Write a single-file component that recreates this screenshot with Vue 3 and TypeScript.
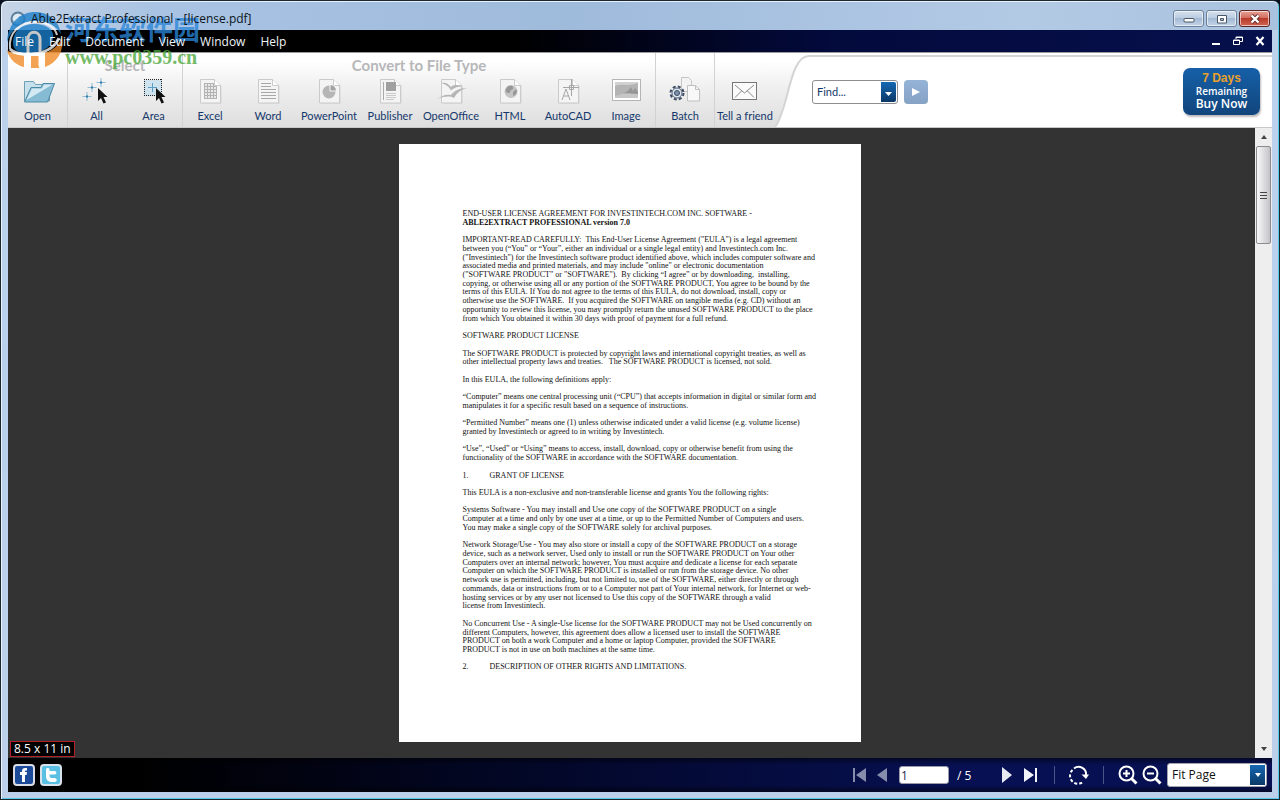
<script setup lang="ts">
import { ref } from 'vue'

interface Tool {
  id: string
  label: string
}

const menus: string[] = ['File', 'Edit', 'Document', 'View', 'Window', 'Help']

const convertTools: Tool[] = [
  { id: 'excel', label: 'Excel' },
  { id: 'word', label: 'Word' },
  { id: 'powerpoint', label: 'PowerPoint' },
  { id: 'publisher', label: 'Publisher' },
  { id: 'openoffice', label: 'OpenOffice' },
  { id: 'html', label: 'HTML' },
  { id: 'autocad', label: 'AutoCAD' },
  { id: 'image', label: 'Image' },
]

const find = ref('Find...')
const page = ref('1')
const zoomLevel = ref('Fit Page')

interface Line {
  text: string
  bold?: boolean
  num?: string
}

const raw: string[] = [
  'END-USER LICENSE AGREEMENT FOR INVESTINTECH.COM INC. SOFTWARE -',
  '*ABLE2EXTRACT PROFESSIONAL version 7.0',
  '',
  'IMPORTANT-READ CAREFULLY:  This End-User License Agreement ("EULA") is a legal agreement',
  'between you (“You” or “Your”, either an individual or a single legal entity) and Investintech.com Inc.',
  '("Investintech") for the Investintech software product identified above, which includes computer software and',
  'associated media and printed materials, and may include "online" or electronic documentation',
  '("SOFTWARE PRODUCT" or "SOFTWARE").  By clicking “I agree” or by downloading,  installing,',
  'copying, or otherwise using all or any portion of the SOFTWARE PRODUCT, You agree to be bound by the',
  'terms of this EULA. If You do not agree to the terms of this EULA, do not download, install, copy or',
  'otherwise use the SOFTWARE.  If you acquired the SOFTWARE on tangible media (e.g. CD) without an',
  'opportunity to review this license, you may promptly return the unused SOFTWARE PRODUCT to the place',
  'from which You obtained it within 30 days with proof of payment for a full refund.',
  '',
  'SOFTWARE PRODUCT LICENSE',
  '',
  'The SOFTWARE PRODUCT is protected by copyright laws and international copyright treaties, as well as',
  'other intellectual property laws and treaties.   The SOFTWARE PRODUCT is licensed, not sold.',
  '',
  'In this EULA, the following definitions apply:',
  '',
  '“Computer” means one central processing unit (“CPU”) that accepts information in digital or similar form and',
  'manipulates it for a specific result based on a sequence of instructions.',
  '',
  '“Permitted Number” means one (1) unless otherwise indicated under a valid license (e.g. volume license)',
  'granted by Investintech or agreed to in writing by Investintech.',
  '',
  '“Use”, “Used” or “Using” means to access, install, download, copy or otherwise benefit from using the',
  'functionality of the SOFTWARE in accordance with the SOFTWARE documentation.',
  '',
  '1.|GRANT OF LICENSE',
  '',
  'This EULA is a non-exclusive and non-transferable license and grants You the following rights:',
  '',
  'Systems Software - You may install and Use one copy of the SOFTWARE PRODUCT on a single',
  'Computer at a time and only by one user at a time, or up to the Permitted Number of Computers and users.',
  'You may make a single copy of the SOFTWARE solely for archival purposes.',
  '',
  'Network Storage/Use - You may also store or install a copy of the SOFTWARE PRODUCT on a storage',
  'device, such as a network server, Used only to install or run the SOFTWARE PRODUCT on Your other',
  'Computers over an internal network; however, You must acquire and dedicate a license for each separate',
  'Computer on which the SOFTWARE PRODUCT is installed or run from the storage device. No other',
  'network use is permitted, including, but not limited to, use of the SOFTWARE, either directly or through',
  'commands, data or instructions from or to a Computer not part of Your internal network, for Internet or web-',
  'hosting services or by any user not licensed to Use this copy of the SOFTWARE through a valid',
  'license from Investintech.',
  '',
  'No Concurrent Use - A single-Use license for the SOFTWARE PRODUCT may not be Used concurrently on',
  'different Computers, however, this agreement does allow a licensed user to install the SOFTWARE',
  'PRODUCT on both a work Computer and a home or laptop Computer, provided the SOFTWARE',
  'PRODUCT is not in use on both machines at the same time.',
  '',
  '2.|DESCRIPTION OF OTHER RIGHTS AND LIMITATIONS.',
]

const lines: Line[] = raw.map((text) => {
  if (text.startsWith('*')) return { text: text.slice(1), bold: true }
  const [num, rest] = text.split('|')
  return rest ? { text: rest, num } : { text }
})
</script>

<template>
  <div class="window">
    <header class="titlebar">
      <svg class="app-icon" viewBox="0 0 16 16" aria-hidden="true">
        <circle cx="8" cy="8" r="7.5" fill="#5d7f9c" />
        <circle cx="8" cy="8" r="5.5" fill="#9fbdd3" />
        <path d="M3 6c2-4 7-4 9-1-3-1-4 1-3 3s-1 4-3 3-4-2-3-5z" fill="#dfeaf2" />
      </svg>
      <h1 class="title">Able2Extract Professional - [license.pdf]</h1>
      <div class="win-buttons">
        <button type="button" class="win-btn" aria-label="Minimize">
          <svg width="12" height="10" viewBox="0 0 12 10"><rect x="1" y="4.5" width="10" height="3.5" rx="1" fill="#fff" stroke="#4a5766" /></svg>
        </button>
        <button type="button" class="win-btn" aria-label="Maximize">
          <svg width="12" height="10" viewBox="0 0 12 10"><path d="M1.500 1.500h9v7.500h-9zM4.500 4.500v2h3v-2z" fill="#fff" fill-rule="evenodd" stroke="#4a5766" /></svg>
        </button>
        <button type="button" class="win-btn close" aria-label="Close">
          <svg width="12" height="10" viewBox="0 0 12 10"><path d="M2.500 1.500L9.500 8.500M9.500 1.500L2.500 8.500" stroke="#5a2a2a" stroke-width="4" /><path d="M2.500 1.500L9.500 8.500M9.500 1.500L2.500 8.500" stroke="#fff" stroke-width="2.400" /></svg>
        </button>
      </div>
    </header>

    <nav class="menubar">
      <button v-for="m in menus" :key="m" type="button" class="menu">{{ m }}</button>
      <div class="mdi">
        <button type="button" aria-label="Minimize document">
          <svg width="10" height="10" viewBox="0 0 10 10"><path d="M1 8h8" stroke="#fff" stroke-width="2" /></svg>
        </button>
        <button type="button" aria-label="Restore document">
          <svg width="10" height="10" viewBox="0 0 10 10" fill="none" stroke="#fff"><path d="M3 3V1h6.500v4.500H7M3 1.500h6.500M.5 4h6v4.500h-6zM.5 4.500h6" /></svg>
        </button>
        <button type="button" aria-label="Close document">
          <svg width="10" height="10" viewBox="0 0 10 10"><path d="M1.500 1l7 8M8.500 1l-7 8" stroke="#fff" stroke-width="2.200" /></svg>
        </button>
      </div>
    </nav>

    <section class="toolbar">
      <div class="group open">
        <span class="group-title"></span>
        <button type="button" class="tool">
          <svg class="ico" viewBox="0 0 34 30" aria-hidden="true">
            <path d="M3.500 25V5.500h9l2 3h14v16.500z" fill="#c6e0ec" stroke="#6f9fb5" />
            <path d="M3.500 26L10 11.500h10l2-4h11.500L26.500 26z" fill="#86bbd4" stroke="#4f8aa5" />
            <path d="M5.500 24L11 12.500h10l2-4h8.500z" fill="#d3eaf3" />
          </svg>
          <span>Open</span>
        </button>
      </div>

      <div class="group select">
        <span class="group-title">Select</span>
        <button type="button" class="tool">
          <svg class="ico" viewBox="0 0 34 30" aria-hidden="true">
            <path d="M7 16v9M2.500 20.500h9M12 7v9M7.500 11.500h9M21 2v9M16.500 6.500h9" stroke="#8fbcd4" />
            <path d="M6 20.500h2M11 11.500h2M20 6.500h2" stroke="#2e7ba8" stroke-width="2" />
            <path d="M18 12v13l3-3 2.500 5.500 2.500-1-2.500-5.500h4z" fill="#111" />
          </svg>
          <span>All</span>
        </button>
        <button type="button" class="tool">
          <svg class="ico" viewBox="0 0 34 30" aria-hidden="true">
            <rect x="7" y="4" width="18" height="16" fill="#cfe3ef" />
            <path d="M7 3.500h18M7 19.500h18M7.500 3v17M24.500 3v17" stroke="#222" stroke-dasharray="1 1" />
            <path d="M15.500 7v9M11 11.500h9" stroke="#5a9ec4" />
            <path d="M19 12v13l3-3 2.500 5.500 2.500-1-2.500-5.500h4z" fill="#111" />
          </svg>
          <span>Area</span>
        </button>
      </div>

      <div class="group convert">
        <span class="group-title">Convert to File Type</span>
        <button v-for="t in convertTools" :key="t.id" type="button" class="tool">
          <svg class="ico" viewBox="0 0 34 30" aria-hidden="true">
            <template v-if="t.id !== 'image'">
              <path d="M8.500 4.500h14l6 5v18h-20z" fill="#c9c9c9" opacity=".6" />
              <path d="M7.500 3.500h14l6 6v17.500h-20z" fill="#f4f4f4" stroke="#cbcbcb" />
              <path d="M21.500 3.500v6h6" fill="#fff" stroke="#cbcbcb" />
            </template>
            <g v-if="t.id === 'excel'">
              <path d="M11.500 7.500h9v3h3v12h-12z" fill="#e8e8e8" />
              <path d="M11.500 7v16M14.500 7v16M17.500 7v16M20.500 7v16M23.500 10v13M11 7.500h10M11 10.500h13M11 13.500h13M11 16.500h13M11 19.500h13M11 22.500h13" stroke="#b3b3b3" />
            </g>
            <path v-else-if="t.id === 'word'" d="M10 7.500h10M10 10.500h10M10 13.500h15M10 16.500h15M10 19.500h15M10 22.500h15" stroke="#a8a8a8" />
            <g v-else-if="t.id === 'powerpoint'">
              <circle cx="17" cy="16" r="6.500" fill="#b6b6b6" />
              <path d="M18 15V8.500a6.500 6.500 0 0 1 6.500 6.500z" fill="#a2a2a2" stroke="#f6f6f6" />
            </g>
            <g v-else-if="t.id === 'publisher'">
              <path d="M10.500 6v18" stroke="#aaa" />
              <rect x="13" y="6" width="10" height="9" fill="#a0a0a0" />
              <path d="M13 17.500h10M13 19.500h10M13 21.500h10M13 23.500h8" stroke="#c9c9c9" />
            </g>
            <g v-else-if="t.id === 'openoffice'" fill="#b6b6b6">
              <path d="M7 7c4-1 7 0 10 4 3-3 7-2 12-.5-5 0-8 .5-12 4-2-4-5-6-10-7.500z" />
              <path d="M3 23c6-4 9-5 14-4 3-4 8-7 16-7-7 2-10 5-13 10-4-2-9-2-17 1z" />
            </g>
            <g v-else-if="t.id === 'html'">
              <circle cx="18" cy="15.500" r="6.500" fill="#c4c4c4" />
              <path d="M13 13c2-4 6-4 7-2s-1 3-2 3 0 3-2 3-4-1-3-4zM20 16l3-3c2 3 0 6-3 7z" fill="#979797" />
            </g>
            <g v-else-if="t.id === 'autocad'" fill="none" stroke="#a6a6a6">
              <path d="M11 24l4-11 4 11M12.500 20h5" />
              <path d="M20.500 3v17M12 11.500h16M18.500 9.500h4v4h-4z" />
            </g>
            <g v-else-if="t.id === 'image'">
              <rect x="3.500" y="3.500" width="28" height="21" fill="#fff" stroke="#b5b5b5" />
              <rect x="6" y="6" width="23" height="16" fill="#b4b4b4" />
              <path d="M6 10c8-3 12 1 23-3V6H6z" fill="#d2d2d2" />
              <path d="M15 17c3-1 5-3 7-6l2 4 2-3 3 4v3z" fill="#969696" />
              <path d="M6 20c8-3 14-3 23-2v4H6z" fill="#c6c6c6" />
            </g>
          </svg>
          <span>{{ t.label }}</span>
        </button>
      </div>

      <div class="group batch">
        <span class="group-title"></span>
        <button type="button" class="tool">
          <svg class="ico" viewBox="0 0 34 30" aria-hidden="true">
            <path d="M13.500 1.500h7l3 3v11h-10z" fill="#f3f3f3" stroke="#c6c6c6" />
            <path d="M19.500 9.500h8l4 4v11.500h-12z" fill="#f8f8f8" stroke="#c0c0c0" />
            <path d="M27.500 9.500v4h4" fill="none" stroke="#c0c0c0" />
            <circle cx="9" cy="17" r="6.500" fill="none" stroke="#3b4a60" stroke-width="2" stroke-dasharray="3 2.100" />
            <circle cx="9" cy="17" r="5" fill="#dfe6ee" stroke="#54657e" />
            <circle cx="9" cy="17" r="2.500" fill="#7d93ae" stroke="#3b4a60" />
          </svg>
          <span>Batch</span>
        </button>
      </div>

      <div class="group tell">
        <span class="group-title"></span>
        <button type="button" class="tool">
          <svg class="ico" viewBox="0 0 34 30" aria-hidden="true">
            <rect x="4.500" y="6.500" width="24" height="17" fill="#fbfbfb" stroke="#777" />
            <path d="M7 9l9.500 8L26 9M7 21.500l6.500-6.500M26 21.500L19.500 15" fill="none" stroke="#8a8a8a" />
          </svg>
          <span>Tell a friend</span>
        </button>
      </div>

      <svg class="curve" viewBox="0 0 37 74" aria-hidden="true">
        <path d="M0 74C14 56 14 3 34 3H37V74z" fill="#fff" />
        <path d="M0 74C14 56 14 3 34 3H37" fill="none" stroke="#d4d4d6" stroke-width="2" />
      </svg>
      <div class="side">
        <form class="find" @submit.prevent>
          <div class="combo">
            <input v-model="find" aria-label="Find" type="text" />
            <button type="button" aria-label="Find history">
              <svg width="7" height="4" viewBox="0 0 7 4"><path d="M0 0h7L3.500 4z" fill="#fff" /></svg>
            </button>
          </div>
          <button type="submit" class="go" aria-label="Find next">
            <svg width="10" height="10" viewBox="0 0 10 10"><path d="M1 1l8 4-8 4z" fill="#fff" /></svg>
          </button>
        </form>
        <button type="button" class="buy">
          <span class="days">7 Days</span>
          <span class="remaining">Remaining</span>
          <span class="now">Buy Now</span>
        </button>
      </div>
    </section>

    <main class="workspace">
      <div class="canvas">
        <article class="sheet">
          <p v-for="(l, i) in lines" :key="i" :class="{ bold: l.bold }">
            <span v-if="l.num" class="num">{{ l.num }}</span>{{ l.text }}
          </p>
        </article>
        <div class="size">8.5 x 11 in</div>
      </div>
      <div class="scrollbar">
        <button type="button" aria-label="Scroll up">
          <svg width="6" height="4" viewBox="0 0 6 4"><path d="M0 4h6L3 0z" fill="#444" /></svg>
        </button>
        <div class="thumb"><i></i><i></i><i></i></div>
        <button type="button" class="down" aria-label="Scroll down">
          <svg width="6" height="4" viewBox="0 0 6 4"><path d="M0 0h6L3 4z" fill="#444" /></svg>
        </button>
      </div>
    </main>

    <footer class="status">
      <a href="#" class="social" aria-label="Facebook">
        <svg viewBox="0 0 22 22"><rect x="1" y="1" width="20" height="20" rx="3" fill="#1b4a98" stroke="#d8dde6" stroke-width="2" /><path d="M9 18v-7H7V8h2V7c0-2.500 1.500-3.500 5-3v2.500c-1.500-.2-2 0-2 1.500h2l-.4 3H12v7z" fill="#fff" /></svg>
      </a>
      <a href="#" class="social" aria-label="Twitter">
        <svg viewBox="0 0 22 22"><rect x="1" y="1" width="20" height="20" rx="3" fill="#59bfe3" stroke="#d8e2ea" stroke-width="2" /><path d="M6 5.500c0-2 3.500-2 3.500 0V7h5c2.500 0 2.500 3.500 0 3.500h-5c-.3 3 1 4 5 3.500 3 0 3 4 0 4-5.500.5-8.500-1-8.500-6z" fill="#fff" /></svg>
      </a>
      <div class="pager">
        <button type="button" class="nav" aria-label="First page">
          <svg width="14" height="16" viewBox="0 0 14 16"><path d="M0 1h2v14H0zM13 1v14L3 8z" fill="#868cab" /></svg>
        </button>
        <button type="button" class="nav prev" aria-label="Previous page">
          <svg width="10" height="16" viewBox="0 0 10 16"><path d="M10 1v14L0 8z" fill="#868cab" /></svg>
        </button>
        <input v-model="page" class="page-input" type="text" aria-label="Page" />
        <span class="of">/ 5</span>
        <button type="button" class="nav" aria-label="Next page">
          <svg width="10" height="16" viewBox="0 0 10 16"><path d="M0 0v16l10-8z" fill="#e8eaf2" /></svg>
        </button>
        <button type="button" class="nav last" aria-label="Last page">
          <svg width="14" height="16" viewBox="0 0 14 16"><path d="M0 1v14l10-7zM11 1h2v14h-2z" fill="#f4f5f9" /></svg>
        </button>
        <span class="sep"></span>
        <button type="button" class="nav rotate" aria-label="Rotate">
          <svg width="20" height="20" viewBox="0 0 20 20"><path d="M5 3.500a7.500 7.500 0 0 1 12 7" fill="none" stroke="#fff" stroke-width="2" /><path d="M12.500 9.500H20L17 14z" fill="#fff" /><path d="M3.500 5a7.500 7.500 0 0 0 11 11.500" fill="none" stroke="#fff" stroke-width="2" stroke-dasharray="3 2" /></svg>
        </button>
        <span class="sep"></span>
        <button type="button" class="nav" aria-label="Zoom in">
          <svg width="20" height="20" viewBox="0 0 20 20" fill="none" stroke="#fff"><circle cx="8.500" cy="8.500" r="7" stroke-width="2" /><path d="M13.500 13.500l5 5" stroke-width="3" /><path d="M5 8.500h7M8.500 5v7" stroke-width="2" /></svg>
        </button>
        <button type="button" class="nav out" aria-label="Zoom out">
          <svg width="20" height="20" viewBox="0 0 20 20" fill="none" stroke="#fff"><circle cx="8.500" cy="8.500" r="7" stroke-width="2" /><path d="M13.500 13.500l5 5" stroke-width="3" /><path d="M5 8.500h7" stroke-width="2" /></svg>
        </button>
        <div class="zoom">
          <select v-model="zoomLevel" aria-label="Zoom level">
            <option>Fit Page</option>
            <option>Fit Width</option>
          </select>
          <span class="arrow">
            <svg width="6" height="4" viewBox="0 0 6 4"><path d="M0 0h6L3 4z" fill="#fff" /></svg>
          </span>
        </div>
      </div>
    </footer>

    <div class="watermark">
      <svg class="mark" viewBox="0 0 58 58" aria-hidden="true">
        <path d="M2 40C4 50 13 56 19 57V45C12 45 6 43 2 40zM26 46h8v12h-8zM40 43C49 40 55 34 57 27 59 41 53 52 40 57z" fill="#f08a24" />
        <path d="M2 32C3 12 16 2 30 2c14 0 24 9 26 22-6-9-15-14-26-13C16 11 6 20 2 32z" fill="#1a7fcb" />
        <path d="M8 33C8 20 18 14 29 14c14 0 21 7 19 15-2 9-12 14-26 14-10 0-14-4-14-10z" fill="#1a7fcb" />
        <path d="M5 39C3 22 16 12 30 12c12 0 20 5 22 13" fill="none" stroke="#fff" stroke-width="2" />
        <path d="M5 39c7 8 40 9 49-11" fill="none" stroke="#fff" stroke-width="3" />
        <path d="M23 45V29c0-9 12-9 12 0v27" fill="none" stroke="#fff" stroke-width="3" />
      </svg>
      <div class="wm-text">
        <strong>河东软件园</strong>
        <em>www.pc0359.cn</em>
      </div>
    </div>
  </div>
</template>

<style>
body {
  background: #06101c;
}
</style>

<style scoped>
* {
  box-sizing: border-box;
}
button {
  border: 0;
  padding: 0;
  background: none;
  font: inherit;
  color: inherit;
}
.window {
  position: relative;
  display: flex;
  flex-direction: column;
  height: 100vh;
  min-height: 480px;
  padding: 0 7px 7px;
  border: 1px solid #1c2732;
  border-radius: 7px 7px 0 0;
  background: linear-gradient(#bdd1ea, #b9d1ee 40%, #bcd0ea);
  box-shadow: inset 1px 1px #e8f2fb, inset -1px -1px #57cbe6;
  font-family: "Open Sans", "Noto Sans", sans-serif;
}
.titlebar {
  display: flex;
  align-items: center;
  height: 28px;
  flex: none;
  margin: 1px -6px 0;
  padding: 5px 8px 0;
  border-radius: 6px 6px 0 0;
  background: linear-gradient(90deg, #c6d4e6, #a8c3e3 12%, #9fbbdc 45%, #b3cae5 80%, #a9c2de);
}
.app-icon {
  width: 16px;
  height: 16px;
}
.title {
  position: relative;
  z-index: 2;
  margin: 0 0 0 5px;
  font-size: 12px;
  font-weight: 400;
  line-height: 20px;
  color: #0c1420;
}
.win-buttons {
  display: flex;
  gap: 2px;
  margin-left: auto;
}
.win-btn {
  display: flex;
  align-items: center;
  justify-content: center;
  width: 31px;
  height: 17px;
  border: 1px solid #6c7f96;
  border-radius: 3px;
  background: linear-gradient(#d5e0ee, #b9cbe0 50%, #a4bad4 50%, #c2d4e8);
  box-shadow: inset 0 0 0 1px rgba(255, 255, 255, 0.6);
}
.close {
  border-color: #5b2525;
  background: linear-gradient(#e6a397, #d0685a 50%, #b93a28 50%, #cf6552);
}
.menubar {
  display: flex;
  align-items: center;
  gap: 15px;
  height: 22px;
  flex: none;
  padding: 0 7px;
  background: linear-gradient(90deg, #000 40%, #030a3c 65%, #06104c);
  color: #fff;
  font-size: 12px;
}
.menu {
  position: relative;
  z-index: 2;
  color: #eef4fa;
}
.mdi {
  display: flex;
  gap: 12px;
  margin-left: auto;
}
.mdi svg {
  display: block;
}
.toolbar {
  display: flex;
  flex: none;
  height: 76px;
  border-top: 1px solid #9a9a9e;
  border-bottom: 1px solid #c8c8c8;
  background: linear-gradient(#fff 10%, #f0f0f0 45%, #dedede);
  color: #14386b;
}
.group {
  display: grid;
  grid-template-rows: 23px 49px;
  flex: none;
  justify-items: center;
  border-right: 1px solid #d2d2d2;
}
.open {
  grid-template-columns: 59px;
}
.select {
  grid-template-columns: 57px 57px;
}
.convert {
  grid-template-columns: 54px 62px 60px 62px 60px 58px 58px 58px;
}
.batch {
  grid-template-columns: 58px;
}
.tell {
  grid-template-columns: 60px;
  border-right: 0;
}
.group-title {
  grid-column: 1 / -1;
  font: bold 15px/24px Lato, sans-serif;
  color: #b7b7b9;
}
.tool {
  display: flex;
  flex-direction: column;
  align-items: center;
  gap: 2px;
  white-space: nowrap;
  font: 11px/16px Lato, sans-serif;
}
.ico {
  width: 34px;
  height: 30px;
}
.curve {
  flex: none;
  width: 37px;
  height: 74px;
}
.side {
  display: flex;
  flex: 1;
  align-items: flex-start;
  justify-content: space-between;
  padding-right: 12px;
  border-top: 2px solid #d4d4d6;
  margin-top: 2px;
  background: #fff;
}
.find {
  display: flex;
  gap: 6px;
  margin-top: 23px;
}
.combo {
  display: flex;
  width: 86px;
  height: 24px;
  padding: 1px;
  border: 1px solid #8d8d92;
  border-radius: 3px;
  background: #fff;
}
.combo input {
  flex: 1;
  min-width: 0;
  padding: 0 3px;
  border: 0;
  background: none;
  font: 11px/20px Lato, sans-serif;
  color: #14386b;
}
.combo button {
  width: 15px;
  border-radius: 0 2px 2px 0;
  background: linear-gradient(#1669b4, #0a3866);
}
.combo svg {
  display: block;
  margin: 4px auto 0;
}
.go {
  display: flex;
  align-items: center;
  justify-content: center;
  width: 24px;
  height: 24px;
  border-radius: 4px;
  background: linear-gradient(#94b3d6, #86a2c4);
}
.buy {
  display: flex;
  flex-direction: column;
  align-items: center;
  width: 77px;
  height: 47px;
  margin-top: 11px;
  padding-top: 4px;
  border-radius: 7px;
  background: linear-gradient(#1660a8, #11457c);
  box-shadow: 1px 2px 2px #bbb;
  color: #fff;
  font-size: 12px;
  line-height: 13px;
}
.days {
  font: bold 12px/13px "Liberation Sans", sans-serif;
  color: #e8a02c;
}
.remaining {
  font-size: 10px;
  font-weight: 600;
  line-height: 12px;
}
.now {
  font-weight: 600;
  line-height: 14px;
}
.workspace {
  display: flex;
  flex: 1;
  min-height: 0;
}
.canvas {
  position: relative;
  display: flex;
  flex: 1;
  justify-content: center;
  align-items: flex-start;
  min-width: 0;
  overflow: hidden;
  padding: 16px 4px 16px 0;
  background: #333;
}
.sheet {
  display: flex;
  flex-direction: column;
  justify-content: space-between;
  flex: none;
  width: 462px;
  height: 100%;
  padding: 66px 0 70px 64px;
  background: #fff;
  color: #111;
  font: 8px/8px "Liberation Serif", serif;
}
.sheet p {
  margin: 0;
  min-height: 8px;
  white-space: pre;
}
.bold {
  font-weight: bold;
}
.num {
  display: inline-block;
  width: 27px;
}
.size {
  position: absolute;
  left: 2px;
  bottom: 1px;
  padding: 0 3px;
  border: 1px solid #b3202a;
  background: #000;
  color: #fff;
  font-size: 12px;
  line-height: 14px;
}
.scrollbar {
  display: flex;
  flex-direction: column;
  width: 17px;
  background: #eeeeef;
}
.scrollbar button {
  display: flex;
  align-items: center;
  justify-content: center;
  height: 18px;
}
.scrollbar .down {
  margin-top: auto;
}
.thumb {
  display: flex;
  flex-direction: column;
  align-items: center;
  justify-content: center;
  gap: 2px;
  height: 98px;
  margin: 0 1px;
  border: 1px solid #8b8b8f;
  border-radius: 2px;
  background: linear-gradient(90deg, #f6f6f6, #dedee0 50%, #c4c4c8);
}
.thumb i {
  width: 7px;
  height: 1px;
  background: #444;
}
.status {
  display: flex;
  align-items: center;
  gap: 5px;
  height: 34px;
  flex: none;
  padding: 0 5px;
  background: linear-gradient(rgba(0, 0, 0, 0.5), transparent 20%, transparent 80%, rgba(0, 0, 0, 0.5)),
    linear-gradient(90deg, #000 10%, #03082c 45%, #071052 75%, #071052);
  color: #fff;
  font-size: 12px;
}
.social,
.social svg {
  display: block;
  width: 22px;
  height: 22px;
}
.pager {
  display: flex;
  align-items: center;
  margin-left: auto;
}
.nav svg {
  display: block;
}
.prev {
  margin: 0 12px 0 10px;
}
.page-input {
  width: 50px;
  height: 18px;
  padding: 0 1px;
  border: 1px solid #9a9aa8;
  border-radius: 3px;
  background: #fff;
  font: 12px/16px "Open Sans", sans-serif;
  color: #222b50;
}
.of {
  width: 45px;
  margin-left: 8px;
}
.last {
  margin: 0 16px 0 12px;
}
.sep {
  width: 1px;
  height: 18px;
  margin-right: 14px;
  background: #4c5588;
}
.rotate {
  margin-right: 14px;
}
.out {
  margin: 0 5px 0 4px;
}
.zoom {
  display: flex;
  align-items: center;
  width: 100px;
  height: 24px;
  padding: 1px;
  border: 1px solid #a4a4ae;
  border-radius: 3px;
  background: #fff;
}
.zoom select {
  appearance: none;
  flex: 1;
  min-width: 0;
  padding: 0 3px;
  border: 0;
  background: none;
  font: 12px/20px "Open Sans", sans-serif;
  color: #111;
}
.arrow {
  display: flex;
  align-items: center;
  justify-content: center;
  width: 15px;
  height: 20px;
  background: linear-gradient(#1669b4, #0a3866);
}
.watermark {
  position: absolute;
  z-index: 1;
  left: 4px;
  top: 9px;
  display: flex;
  gap: 2px;
  opacity: 0.78;
  pointer-events: none;
}
.mark {
  width: 58px;
  height: 58px;
}
.wm-text {
  display: flex;
  flex-direction: column;
}
.wm-text strong {
  font: bold 27px/38px "Noto Sans CJK SC", sans-serif;
  color: #2a86d8;
}
.wm-text em {
  font: bold 20px/18px "Liberation Serif", serif;
  color: #4da83c;
}
</style>
